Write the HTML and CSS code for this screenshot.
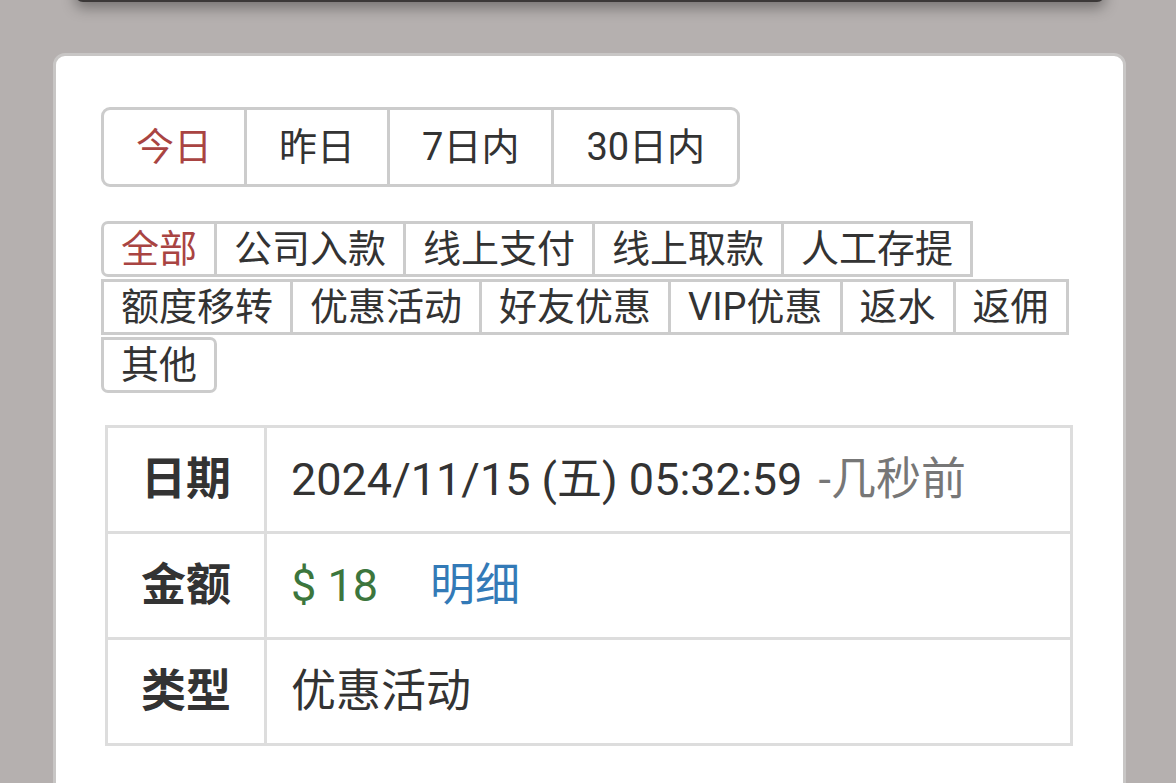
FILE: index.html
```html
<!DOCTYPE html>
<html lang="zh-CN">
<head>
  <meta charset="UTF-8">
  <meta name="viewport" content="width=device-width, initial-scale=1.0">
  <title>交易记录</title>
  <link rel="stylesheet" href="styles.css">
</head>
<body>
  <div class="top-sheet"></div>

  <div class="card">
    <div class="range-group">
      <button class="range-btn active">今日</button>
      <button class="range-btn">昨日</button>
      <button class="range-btn">7日内</button>
      <button class="range-btn">30日内</button>
    </div>

    <div class="tag-group">
      <button class="tag first active">全部</button>
      <button class="tag">公司入款</button>
      <button class="tag">线上支付</button>
      <button class="tag">线上取款</button>
      <button class="tag">人工存提</button>
      <button class="tag">额度移转</button>
      <button class="tag">优惠活动</button>
      <button class="tag">好友优惠</button>
      <button class="tag">VIP优惠</button>
      <button class="tag">返水</button>
      <button class="tag">返佣</button>
      <button class="tag last">其他</button>
    </div>

    <table class="detail">
      <tr>
        <th>日期</th>
        <td>2024/11/15 (五) 05:32:59 <span class="ago">-几秒前</span></td>
      </tr>
      <tr>
        <th>金额</th>
        <td><span class="amount">$ 18</span><a class="more" href="#">明细</a></td>
      </tr>
      <tr>
        <th>类型</th>
        <td>优惠活动</td>
      </tr>
    </table>
  </div>
</body>
</html>
```

FILE: styles.css
```css
body {
  margin: 0;
  padding: 0;
  background-color: #b5b0af;
  font-family: Roboto, "Noto Sans CJK SC", sans-serif;
  color: #333;
  overflow: hidden;
}
.top-sheet {
  height: 22px;
  margin: -20px 71px 0 75px;
  background-color: #3b3838;
  border-radius: 0 0 8px 8px;
  box-shadow: 0 6px 14px rgba(0, 0, 0, 0.35);
}
.card {
  margin: 51px 0 0 53px;
  width: 1073px;
  min-height: 800px;
  box-sizing: border-box;
  background-color: #fff;
  border: 3px solid #c8c6c5;
  border-radius: 12px;
  padding: 51px 45px;
}
button {
  font-family: inherit;
  background-color: #fff;
  color: #333;
  cursor: pointer;
}
.range-group {
  display: inline-flex;
}
.range-btn {
  font-size: 38px;
  line-height: 52px;
  padding: 11px 32px;
  border: 3px solid #ccc;
  margin-left: -3px;
}
.range-btn:first-child {
  margin-left: 0;
  border-radius: 9px 0 0 9px;
}
.range-btn:last-child {
  border-radius: 0 9px 9px 0;
}
.active {
  color: #a94442;
}
.tag-group {
  display: flex;
  flex-wrap: wrap;
  row-gap: 2px;
  width: 970px;
  margin-top: 34px;
}
.tag {
  font-size: 38px;
  line-height: 50px;
  padding: 0 17px;
  border: 3px solid #ccc;
  margin-left: -3px;
}
.tag.first {
  margin-left: 0;
  border-radius: 7px 0 0 7px;
}
.tag:nth-child(6),
.tag.last {
  margin-left: 0;
}
.tag.last {
  border-radius: 0 7px 7px 7px;
}
.detail {
  margin: 32px 0 0 4px;
  width: 968px;
  border-collapse: collapse;
  font-size: 45px;
  line-height: 61px;
}
.detail th,
.detail td {
  border: 3px solid #ddd;
  padding: 21px 24px;
}
.detail th {
  width: 108px;
  text-align: center;
  font-weight: bold;
}
.detail td {
  text-align: left;
}
.ago {
  color: #777;
  margin-left: 5px;
}
.amount {
  color: #3c763d;
}
.more {
  color: #337ab7;
  text-decoration: none;
  margin-left: 52px;
}
```
